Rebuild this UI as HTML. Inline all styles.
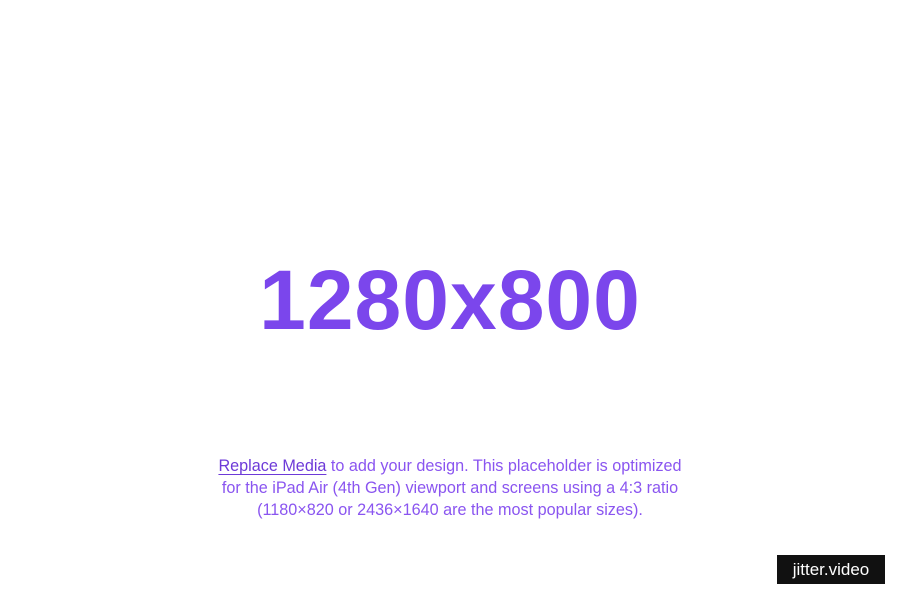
<!DOCTYPE html>
<html><head><style>
body{margin:0;width:900px;height:600px;background:#fff;position:relative;overflow:hidden;font-family:"Liberation Sans",sans-serif}
.big{position:absolute;left:0;width:900px;top:250px;text-align:center;font-size:84px;font-weight:bold;color:#7b46ec;line-height:100px;letter-spacing:1px}
.p{position:absolute;left:100px;width:700px;top:455px;text-align:center;font-size:16.2px;line-height:22px;color:#8a55f0}
.p u{color:#6d3ad8;text-decoration:underline;text-underline-offset:3px}
.b{position:absolute;left:777px;top:555px;width:108px;height:29px;background:#111;color:#fff;font-size:17px;line-height:29px;text-align:center}
</style></head><body>
<div class="big">1280x800</div>
<div class="p"><u>Replace Media</u> to add your design. This placeholder is optimized<br>for the iPad Air (4th Gen) viewport and screens using a 4:3 ratio<br>(1180×820 or 2436×1640 are the most popular sizes).</div>
<div class="b">jitter.video</div>
</body></html>
